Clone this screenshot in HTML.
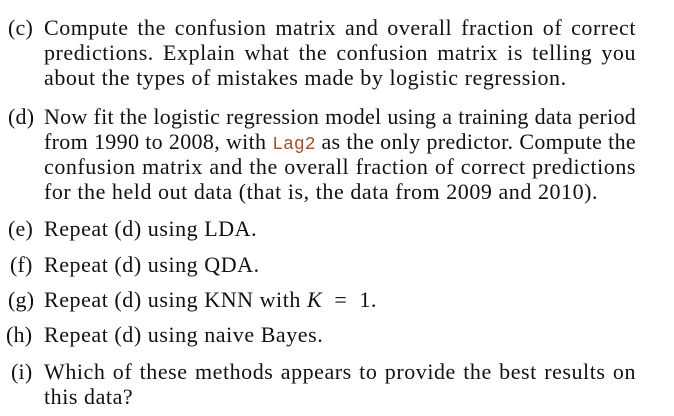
<html><head><style>
body{margin:0;width:674px;height:416px;background:#fff;position:relative;font-family:"Liberation Serif",serif;font-size:22px;letter-spacing:0.55px;color:#111;}
div{position:absolute;height:25px;line-height:25px;white-space:nowrap;}
.l{left:8px;letter-spacing:0.2px;}
.t{left:44px;width:592px;text-align:justify;text-align-last:justify;}
.n{left:44px;}
code{font-family:"Liberation Mono",monospace;color:#a0522d;font-size:18px;letter-spacing:0;}
</style></head><body>
<div class="l" style="top:15px">(c)</div>
<div class="t" style="top:15px">Compute the confusion matrix and overall fraction of correct</div>
<div class="t" style="top:40px">predictions. Explain what the confusion matrix is telling you</div>
<div class="n" style="top:65px">about the types of mistakes made by logistic regression.</div>
<div class="l" style="top:104px">(d)</div>
<div class="t" style="top:104px;letter-spacing:0.25px">Now fit the logistic regression model using a training data period</div>
<div class="t" style="top:129px;letter-spacing:0.32px">from 1990 to 2008, with <code>Lag2</code> as the only predictor. Compute the</div>
<div class="t" style="top:154px">confusion matrix and the overall fraction of correct predictions</div>
<div class="n" style="top:179px">for the held out data (that is, the data from 2009 and 2010).</div>
<div class="l" style="top:216px">(e)</div><div class="n" style="top:216px">Repeat (d) using LDA.</div>
<div class="l" style="top:252px;left:10px">(f)</div><div class="n" style="top:252px">Repeat (d) using QDA.</div>
<div class="l" style="top:287px">(g)</div><div class="n" style="top:287px">Repeat (d) using KNN with <i>K</i>&nbsp;&nbsp;=&nbsp;&nbsp;1.</div>
<div class="l" style="top:322px;left:6px">(h)</div><div class="n" style="top:322px">Repeat (d) using naive Bayes.</div>
<div class="l" style="top:359px;left:11px">(i)</div>
<div class="t" style="top:359px">Which of these methods appears to provide the best results on</div>
<div class="n" style="top:384px">this data?</div>
</body></html>
